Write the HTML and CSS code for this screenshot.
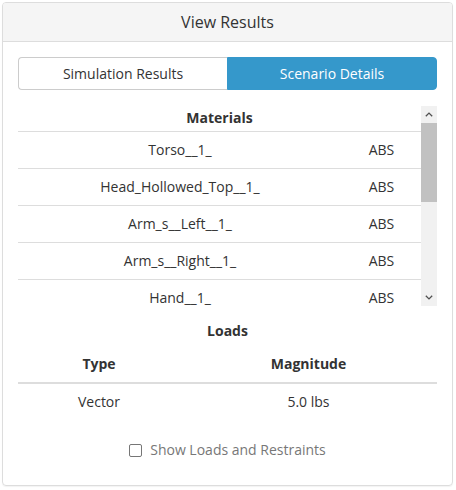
FILE: index.html
```html
<!DOCTYPE html>
<html>
<head>
<meta charset="utf-8">
<link rel="stylesheet" href="styles.css">
</head>
<body>
<div class="panel">
  <div class="panel-heading">View Results</div>
  <div class="panel-body">
    <div class="tabs">
      <div class="tab">Simulation Results</div>
      <div class="tab active">Scenario Details</div>
    </div>
    <div class="scroll-box">
      <div class="scroll-content">
        <table class="materials">
          <thead><tr><th colspan="2">Materials</th></tr></thead>
          <tbody>
            <tr><td class="name">Torso__1_</td><td class="mat">ABS</td></tr>
            <tr><td class="name">Head_Hollowed_Top__1_</td><td class="mat">ABS</td></tr>
            <tr><td class="name">Arm_s__Left__1_</td><td class="mat">ABS</td></tr>
            <tr><td class="name">Arm_s__Right__1_</td><td class="mat">ABS</td></tr>
            <tr><td class="name">Hand__1_</td><td class="mat">ABS</td></tr>
          </tbody>
        </table>
      </div>
      <div class="scrollbar">
        <div class="sb-btn">
          <svg width="8" height="5" viewBox="0 0 8 5"><path d="M0.8 4.3 L4 1.1 L7.2 4.3" fill="none" stroke="#505050" stroke-width="1.3"/></svg>
        </div>
        <div class="sb-track"><div class="sb-thumb"></div></div>
        <div class="sb-btn">
          <svg width="8" height="5" viewBox="0 0 8 5"><path d="M0.8 0.7 L4 3.9 L7.2 0.7" fill="none" stroke="#505050" stroke-width="1.3"/></svg>
        </div>
      </div>
    </div>
    <div class="loads-title">Loads</div>
    <table class="loads">
      <thead><tr><th class="c1">Type</th><th>Magnitude</th></tr></thead>
      <tbody><tr><td class="c1">Vector</td><td>5.0 lbs</td></tr></tbody>
    </table>
    <label class="check">
      <span class="box"></span>
      <span class="check-text">Show Loads and Restraints</span>
    </label>
  </div>
</div>
</body>
</html>
```
FILE: styles.css
```css
* { box-sizing: border-box; }
html, body { margin: 0; padding: 0; background: #fff; }
body {
  font-family: "Open Sans", "Noto Sans", sans-serif;
  font-size: 14px;
  color: #333;
  line-height: 20px;
}
.panel {
  margin: 2px 3px 3px 2px;
  border: 1px solid #ddd;
  border-radius: 4px;
  box-shadow: 0 1px 1px rgba(0,0,0,0.05);
  overflow: hidden;
}
.panel-heading {
  background: #f5f5f5;
  border-bottom: 1px solid #ddd;
  height: 39px;
  text-align: center;
  font-size: 16px;
  line-height: 38px;
}
.panel-body {
  padding: 15px 15px 15px 15px;
}
.tabs {
  display: flex;
  height: 33px;
}
.tab {
  flex: 1;
  text-align: center;
  line-height: 31px;
  border: 1px solid #ccc;
  background: #fff;
}
.tab:first-child {
  border-radius: 4px 0 0 4px;
  border-right: none;
}
.tab.active {
  background: #3598cb;
  border-color: #3598cb;
  color: #fff;
  border-radius: 0 4px 4px 0;
}
.scroll-box {
  display: flex;
  margin-top: 16px;
  height: 200px;
}
.scroll-content {
  flex: 1;
  overflow: hidden;
}
table { border-collapse: collapse; width: 100%; }
.materials th {
  font-weight: bold;
  text-align: center;
  height: 25px;
  padding: 0;
  line-height: 20px;
  vertical-align: middle;
  border-bottom: 1px solid #ddd;
}
.materials td {
  height: 37px;
  padding: 0;
  text-align: center;
  border-bottom: 1px solid #ddd;
}
.materials td.name { width: 324px; }
.scrollbar {
  width: 16px;
  background: #f1f1f1;
  display: flex;
  flex-direction: column;
}
.sb-btn {
  height: 17px;
  display: flex;
  align-items: center;
  justify-content: center;
}
.sb-track { flex: 1; }
.sb-thumb {
  height: 79px;
  background: #c1c1c1;
}
.loads-title {
  text-align: center;
  font-weight: bold;
  margin-top: 15px;
  margin-bottom: 5px;
}
.loads th {
  font-weight: bold;
  text-align: center;
  padding: 8px 0;
  border-bottom: 2px solid #ddd;
}
.loads td {
  text-align: center;
  padding: 8px 0;
}
.loads .c1 { width: 162px; }
.check {
  display: flex;
  justify-content: center;
  align-items: center;
  margin-top: 20px;
  margin-bottom: 10px;
  color: #777;
}
.box {
  width: 13px;
  height: 13px;
  border: 1px solid #767676;
  border-radius: 2px;
  margin-right: 8px;
  background: #fff;
}
```
